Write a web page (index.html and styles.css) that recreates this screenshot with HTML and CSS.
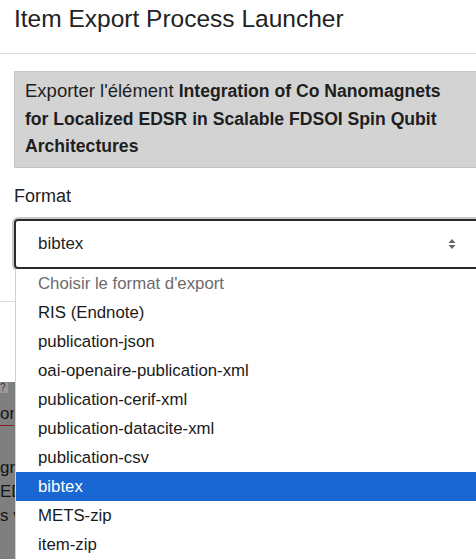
FILE: index.html
```html
<!DOCTYPE html>
<html lang="fr">
<head>
<meta charset="utf-8">
<title>Item Export Process Launcher</title>
<link rel="stylesheet" href="styles.css">
</head>
<body>
<div class="page">
  <div class="modal">
    <div class="modal-header">
      <h4 class="modal-title">Item Export Process Launcher</h4>
    </div>
    <div class="modal-body">
      <div class="alert"><p class="alert-text">Exporter l'élément <b>Integration of Co Nanomagnets for Localized EDSR in Scalable FDSOI Spin Qubit Architectures</b></p></div>
      <label class="label">Format</label>
      <div class="select">
        <span>bibtex</span>
        <svg class="arrows" width="8" height="12" viewBox="0 0 8 12"><path d="M4 1 L7.5 5 H0.5 Z M4 11 L7.5 7 H0.5 Z" fill="#666"/></svg>
      </div>
    </div>
    <div class="modal-footer"></div>
  </div>
  <div class="under">
    <div class="under-btn">?</div>
    <div class="under-link">on</div>
    <div class="under-text">
      <div>gr</div>
      <div>ED</div>
      <div>s v</div>
    </div>
  </div>
  <ul class="dropdown">
    <li class="placeholder">Choisir le format d'export</li>
    <li>RIS (Endnote)</li>
    <li>publication-json</li>
    <li>oai-openaire-publication-xml</li>
    <li>publication-cerif-xml</li>
    <li>publication-datacite-xml</li>
    <li>publication-csv</li>
    <li class="selected">bibtex</li>
    <li>METS-zip</li>
    <li>item-zip</li>
  </ul>
</div>
</body>
</html>
```
FILE: styles.css
```css
html, body {
  margin: 0;
  padding: 0;
  background: #7f7f7f;
}
body {
  font-family: "Liberation Sans", Arial, sans-serif;
  color: #212529;
}
.page {
  position: relative;
  width: 476px;
  height: 559px;
  overflow: hidden;
}
.modal {
  width: 520px;
  background: #fff;
  height: 382px;
  display: flex;
  flex-direction: column;
}
.modal-header {
  height: 54px;
  border-bottom: 1px solid #dcdcdc;
  box-sizing: border-box;
  padding: 0 14px;
}
.modal-title {
  margin: 0;
  padding-top: 4px;
  font-size: 24.5px;
  font-weight: 400;
  line-height: 30px;
  color: #222;
}
.modal-body {
  padding: 17px 14px 0;
}
.alert {
  background: #d3d3d3;
  border: 1px solid #c4c4c4;
  padding: 5px 10px 7px;
  margin-right: -40px;
}
.alert-text {
  margin: 0;
  width: 440px;
  font-size: 18.5px;
  line-height: 27.5px;
  color: #1e1e1e;
}
.alert b {
  font-weight: 700;
  font-size: 17.6px;
  line-height: 1;
}
.label {
  display: block;
  margin-top: 16px;
  font-size: 18px;
  line-height: 24px;
  color: #222;
}
.select {
  margin-top: 11px;
  height: 50px;
  box-sizing: border-box;
  border: 2px solid #2b2b2b;
  border-radius: 4px;
  box-shadow: 0 0 0 2px #c9c9c9;
  display: flex;
  align-items: center;
  padding-left: 22px;
  font-size: 17px;
  width: 490px;
}
.select span {
  flex: 1;
}
.arrows {
  margin-right: 46px;
}
.modal-footer {
  margin-top: 32px;
  border-top: 1px solid #dcdcdc;
}
.under {
  color: #141414;
  font-size: 17px;
}
.under-btn {
  width: 8px;
  height: 10px;
  background: #9a9a9a;
  margin-top: 1px;
  font-size: 10px;
  line-height: 10px;
  color: #333;
  overflow: hidden;
}
.under-link {
  margin-top: 10px;
  width: 14px;
  line-height: 22px;
  border-bottom: 1px solid #8b1a1a;
  overflow: hidden;
  white-space: nowrap;
}
.under-text {
  margin-top: 30px;
  line-height: 24px;
}
.dropdown {
  position: absolute;
  left: 15px;
  top: 269px;
  width: 470px;
  margin: 0;
  padding: 0 0 4px;
  list-style: none;
  background: #fff;
  border-left: 1px solid #d0d0d0;
  border-bottom-left-radius: 6px;
  font-size: 16.8px;
}
.dropdown li {
  height: 29px;
  line-height: 29px;
  padding-left: 22px;
  color: #1a1a1a;
}
.dropdown li.placeholder {
  color: #6b6b6b;
}
.dropdown li.selected {
  background: #1967d2;
  color: #fff;
}
```
